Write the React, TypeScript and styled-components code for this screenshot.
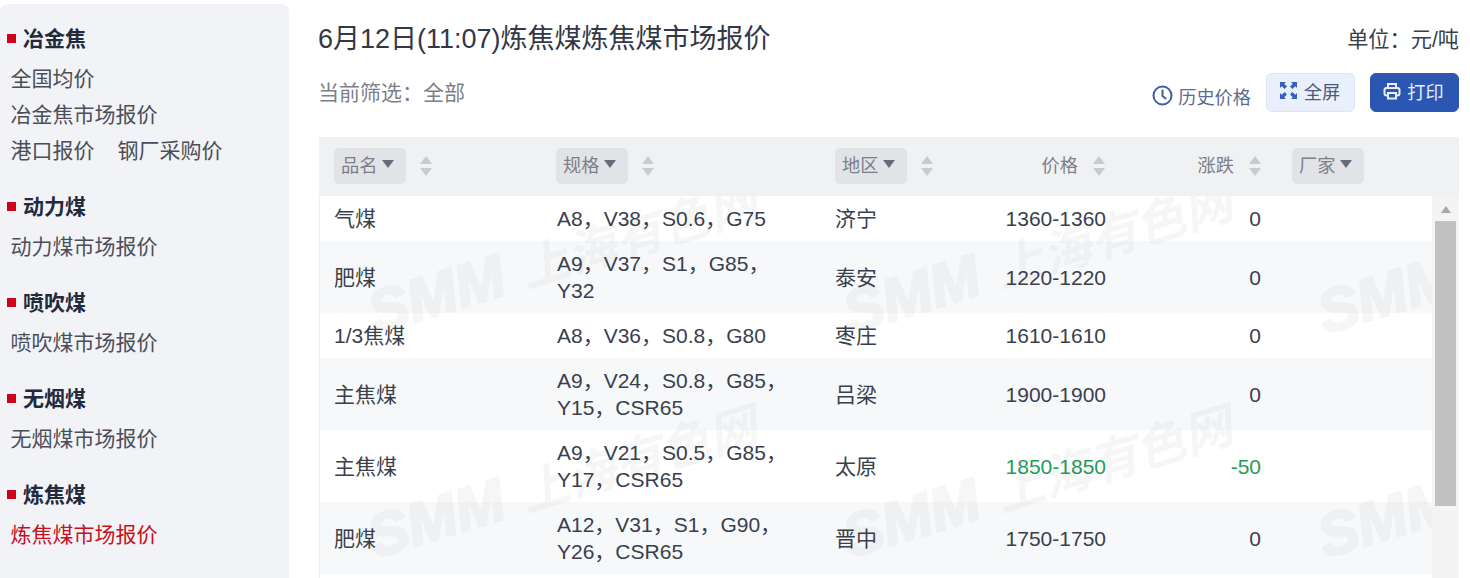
import React from "react";
import styled, { createGlobalStyle } from "styled-components";

const Global = createGlobalStyle`
  html, body { margin: 0; padding: 0; background: #fff; overflow: hidden; height: 578px; }
  body { font-family: "Liberation Sans", "Noto Sans CJK SC", sans-serif; color: #3a3f4d; }
  * { box-sizing: border-box; }
`;

const Page = styled.div`
  display: flex;
  width: 1470px;
  height: 578px;
  overflow: hidden;
`;

const Sidebar = styled.aside`
  flex: none;
  width: 289px;
  height: 620px;
  margin-top: 4px;
  padding-top: 17px;
  background: #f2f3f7;
  border-radius: 8px;
  display: flex;
  flex-direction: column;
  gap: 20px;
`;

const Group = styled.section`
  display: flex;
  flex-direction: column;
`;

const GroupTitle = styled.h3`
  margin: 0 0 4px;
  padding-left: 7px;
  display: flex;
  align-items: center;
  gap: 7px;
  font-size: 21px;
  line-height: 36px;
  font-weight: 700;
  color: #222a3c;
  &::before {
    content: "";
    width: 9px;
    height: 9px;
    margin-top: -2px;
    background: #d0021b;
  }
`;

const NavRow = styled.div`
  display: flex;
  gap: 23px;
  padding-left: 10.500px;
`;

const NavLink = styled.a<{ $active?: boolean }>`
  font-size: 21px;
  line-height: 36px;
  color: ${(p) => (p.$active ? "#c8101e" : "#4b4e59")};
`;

const Main = styled.main`
  flex: none;
  width: 1140px;
  margin-left: 30px;
  padding-top: 19px;
`;

const TitleRow = styled.header`
  display: flex;
  justify-content: space-between;
  align-items: center;
  height: 38px;
`;

const Title = styled.h1`
  margin: 1px 0 0 -1px;
  font-size: 27px;
  line-height: 38px;
  font-weight: 400;
  color: #333846;
`;

const Unit = styled.span`
  margin: 0 0 2px -1px;
  font-size: 21.200px;
  color: #3a3f4d;
`;

const FilterRow = styled.div`
  display: flex;
  justify-content: space-between;
  align-items: center;
  height: 39px;
  margin-top: 16px;
`;

const FilterText = styled.span`
  margin: 0 0 4px -1px;
  font-size: 21px;
  color: #7c7f88;
`;

const Actions = styled.div`
  display: flex;
  align-items: center;
  gap: 15px;
`;

const HistoryLink = styled.a`
  display: flex;
  align-items: center;
  gap: 5px;
  margin-top: 6px;
  font-size: 18.200px;
  color: #5d6b8f;
  svg { display: block; }
`;

const ActionButton = styled.button<{ $primary?: boolean }>`
  display: flex;
  align-items: center;
  justify-content: center;
  gap: 6px;
  width: 89px;
  height: 39px;
  padding: 0 2px 4px 0;
  border-radius: 6px;
  font-family: inherit;
  font-size: 18.200px;
  border: 1px solid ${(p) => (p.$primary ? "#2b57b3" : "#dbe5f6")};
  background: ${(p) => (p.$primary ? "#2b57b3" : "#e9f0fb")};
  color: ${(p) => (p.$primary ? "#e8eefa" : "#4a5a80")};
  svg { display: block; }
`;

const TableWrap = styled.div`
  position: relative;
  margin-top: 25px;
  overflow: hidden;
  height: 460px;
`;

const HeadRow = styled.div`
  display: grid;
  grid-template-columns: 222px 279px 130px 171px 156px 155px 27px;
  height: 59px;
  background: #f0f1f3;
`;

const HeadCell = styled.div<{ $right?: boolean }>`
  display: flex;
  align-items: center;
  justify-content: ${(p) => (p.$right ? "flex-end" : "flex-start")};
  gap: 14px;
  margin-top: -1px;
  padding: ${(p) => (p.$right ? "0 16px 0 0" : "0 0 0 15px")};
  font-size: 18.200px;
  color: #7c7f88;
`;

const HeadLabel = styled.span`
  margin: -5px 1px 0 0;
`;

const Chip = styled.span`
  display: flex;
  align-items: center;
  gap: 5px;
  width: 72px;
  height: 36px;
  padding: 0 0 5px 7px;
  border-radius: 5px;
  background: #e2e3e7;
  &::after {
    content: "";
    border-left: 6.5px solid transparent;
    border-right: 6.5px solid transparent;
    border-top: 8px solid #666b78;
  }
`;

const Sort = styled.span`
  display: flex;
  flex-direction: column;
  gap: 4px;
  &::before, &::after {
    content: "";
    border-left: 6px solid transparent;
    border-right: 6px solid transparent;
  }
  &::before { border-bottom: 8px solid #c8cacf; }
  &::after { border-top: 8px solid #c8cacf; }
`;

const BodyArea = styled.div`
  display: flex;
`;

const Rows = styled.div`
  flex: none;
  width: 1113px;
  border-left: 1px solid #edeef1;
`;

const Row = styled.div<{ $alt?: boolean }>`
  display: grid;
  grid-template-columns: 223px 278px 130px 170px 155px 156px;
  align-items: center;
  background: ${(p) => (p.$alt ? "#f7f8fa" : "#fff")};
`;

const Cell = styled.div<{ $right?: boolean; $down?: boolean; $spec?: boolean }>`
  padding: 9px ${(p) => (p.$right ? "15px" : p.$spec ? "34px" : "14px")} 9.080px 14px;
  font-size: 21px;
  line-height: 27px;
  text-align: ${(p) => (p.$right ? "right" : "left")};
  color: ${(p) => (p.$down ? "#1f9d5b" : "#3a3f4d")};
`;

const Track = styled.div`
  flex: none;
  width: 27px;
  height: 400px;
  padding: 0 3px;
  background: #f4f4f5;
`;

const TrackTop = styled.div`
  height: 25px;
  display: flex;
  justify-content: center;
  padding-top: 10px;
  &::before {
    content: "";
    height: 0;
    border-left: 5.5px solid transparent;
    border-right: 5.5px solid transparent;
    border-bottom: 7px solid #a8a8a8;
  }
`;

const Thumb = styled.div`
  height: 285px;
  background: #c1c1c1;
`;

const Watermarks = styled.div`
  position: absolute;
  top: 59px;
  left: 0;
  right: 27px;
  bottom: 0;
  overflow: hidden;
  pointer-events: none;
`;

const Mark = styled.span<{ $x: number; $y: number }>`
  position: absolute;
  left: ${(p) => p.$x}px;
  top: ${(p) => p.$y}px;
  display: flex;
  align-items: baseline;
  gap: 18px;
  white-space: nowrap;
  font-size: 49px;
  line-height: 60px;
  font-weight: 700;
  font-style: italic;
  color: #283246;
  opacity: 0.035;
  transform: rotate(-17deg);
  transform-origin: left center;
`;

const MarkBrand = styled.span`
  font-size: 60px;
  -webkit-text-stroke: 2.500px #283246;
`;

type Item = { name: string; spec: string; area: string; price: string; change: string };

const items: Item[] = [
  { name: "气煤", spec: "A8，V38，S0.6，G75", area: "济宁", price: "1360-1360", change: "0" },
  { name: "肥煤", spec: "A9，V37，S1，G85，Y32", area: "泰安", price: "1220-1220", change: "0" },
  { name: "1/3焦煤", spec: "A8，V36，S0.8，G80", area: "枣庄", price: "1610-1610", change: "0" },
  { name: "主焦煤", spec: "A9，V24，S0.8，G85，Y15，CSR65", area: "吕梁", price: "1900-1900", change: "0" },
  { name: "主焦煤", spec: "A9，V21，S0.5，G85，Y17，CSR65", area: "太原", price: "1850-1850", change: "-50" },
  { name: "肥煤", spec: "A12，V31，S1，G90，Y26，CSR65", area: "晋中", price: "1750-1750", change: "0" },
];

const groups = [
  { title: "冶金焦", rows: [["全国均价"], ["冶金焦市场报价"], ["港口报价", "钢厂采购价"]] },
  { title: "动力煤", rows: [["动力煤市场报价"]] },
  { title: "喷吹煤", rows: [["喷吹煤市场报价"]] },
  { title: "无烟煤", rows: [["无烟煤市场报价"]] },
  { title: "炼焦煤", rows: [["炼焦煤市场报价"]], active: true },
];

const marks = [
  { x: 51, y: 89 },
  { x: 526, y: 89 },
  { x: 1001, y: 89 },
  { x: 51, y: 313 },
  { x: 526, y: 313 },
  { x: 1001, y: 313 },
];

const ClockIcon = () => (
  <svg width="21" height="21" viewBox="0 0 21 21" fill="none" stroke="#3f5fa8" strokeWidth="2">
    <circle cx="10.5" cy="10.5" r="9" />
    <path d="M10.5 5.500v5.500l3 2.500" strokeLinecap="round" strokeLinejoin="round" />
  </svg>
);

const ExpandIcon = () => (
  <svg width="19" height="19" viewBox="0 0 19 19" fill="#3561b8">
    <path d="M1 1h6L5.200 2.800 8 5.600 5.600 8 2.800 5.200 1 7zM18 1v6l-1.800-1.800L13.400 8 11 5.600l2.800-2.800L12 1zM1 18v-6l1.800 1.800L5.600 11 8 13.400l-2.800 2.800L7 18zM18 18h-6l1.800-1.800L11 13.400l2.400-2.400 2.800 2.800L18 12z" />
  </svg>
);

const PrintIcon = () => (
  <svg width="18" height="18" viewBox="0 0 18 18" fill="none" stroke="#e8eefa" strokeWidth="2">
    <path d="M5 6V2h8v4" />
    <rect x="1.500" y="6" width="15" height="7.500" rx="2" />
    <rect x="5" y="11" width="8" height="5.500" fill="#2b57b3" />
  </svg>
);

export default function App() {
  return (
    <Page>
      <Global />
      <Sidebar>
        {groups.map((g) => (
          <Group key={g.title}>
            <GroupTitle>{g.title}</GroupTitle>
            {g.rows.map((r) => (
              <NavRow key={r.join()}>
                {r.map((l) => (
                  <NavLink key={l} $active={g.active}>{l}</NavLink>
                ))}
              </NavRow>
            ))}
          </Group>
        ))}
      </Sidebar>
      <Main>
        <TitleRow>
          <Title>6月12日(11:07)炼焦煤炼焦煤市场报价</Title>
          <Unit>单位：元/吨</Unit>
        </TitleRow>
        <FilterRow>
          <FilterText>当前筛选：全部</FilterText>
          <Actions>
            <HistoryLink><ClockIcon />历史价格</HistoryLink>
            <ActionButton><ExpandIcon />全屏</ActionButton>
            <ActionButton $primary><PrintIcon />打印</ActionButton>
          </Actions>
        </FilterRow>
        <TableWrap>
          <HeadRow>
            <HeadCell><Chip>品名</Chip><Sort /></HeadCell>
            <HeadCell><Chip>规格</Chip><Sort /></HeadCell>
            <HeadCell><Chip>地区</Chip><Sort /></HeadCell>
            <HeadCell $right><HeadLabel>价格</HeadLabel><Sort /></HeadCell>
            <HeadCell $right><HeadLabel>涨跌</HeadLabel><Sort /></HeadCell>
            <HeadCell><Chip>厂家</Chip></HeadCell>
          </HeadRow>
          <BodyArea>
            <Rows>
              {items.map((it, i) => (
                <Row key={i} $alt={i % 2 === 1}>
                  <Cell>{it.name}</Cell>
                  <Cell $spec>{it.spec}</Cell>
                  <Cell>{it.area}</Cell>
                  <Cell $right $down={it.change !== "0"}>{it.price}</Cell>
                  <Cell $right $down={it.change !== "0"}>{it.change}</Cell>
                </Row>
              ))}
            </Rows>
            <Track>
              <TrackTop />
              <Thumb />
            </Track>
          </BodyArea>
          <Watermarks>
            {marks.map((m, i) => (
              <Mark key={i} $x={m.x} $y={m.y}>
                <MarkBrand>SMM</MarkBrand>上海有色网
              </Mark>
            ))}
          </Watermarks>
        </TableWrap>
      </Main>
    </Page>
  );
}
